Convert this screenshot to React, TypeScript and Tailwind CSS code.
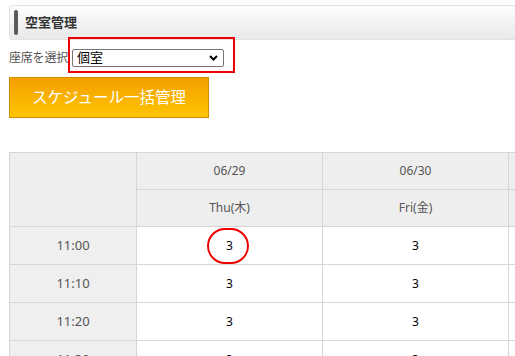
import React from "react";

const font = { fontFamily: '"Noto Sans", "Noto Sans CJK JP", sans-serif' };

const rows = ["11:00", "11:10", "11:20", "11:30"];
const days = [
  { d: "06/29", w: "Thu(木)" },
  { d: "06/30", w: "Fri(金)" },
];

export default function App() {
  return (
    <div className="w-[515px] h-[356px] overflow-hidden bg-white relative" style={font}>
      <div className="w-[900px] pl-[9px] pt-[5px]">
        {/* header bar */}
        <div className="h-[35px] rounded-[3px] border border-[#e3e3e3] bg-gradient-to-b from-[#fdfdfd] to-[#e9e9e9] flex items-center pl-[4px]">
          <div className="w-[4px] h-[25px] rounded-[2px] bg-[#5a5a5a]" />
          <span className="ml-[7px] text-[13px] font-bold text-[#333] leading-none">空室管理</span>
        </div>

        {/* select row */}
        <div className="mt-[9px] flex items-center h-[17px]">
          <span className="text-[12px] text-[#555] leading-none tracking-[-0.2px]">座席を選択</span>
          <div className="ml-[4px] w-[152px] h-[18px] border border-[#767676] rounded-[2px] bg-white flex items-center justify-between pl-[4px] pr-[5px]">
            <span className="text-[13px] text-black leading-none">個室</span>
            <svg width="9" height="6" viewBox="0 0 9 6">
              <path d="M1 1 L4.5 4.5 L8 1" fill="none" stroke="#000" strokeWidth="2" />
            </svg>
          </div>
        </div>

        {/* button */}
        <div className="mt-[11px] w-[200px] h-[41px] border border-[#d48c00] bg-gradient-to-b from-[#f5a000] to-[#fdc400] flex items-center justify-center">
          <span className="text-[15.5px] text-white leading-none">スケジュール一括管理</span>
        </div>

        {/* table */}
        <table className="mt-[34px] border-collapse text-[12px] text-[#555] table-fixed">
          <colgroup>
            <col className="w-[127px]" />
            <col className="w-[186px]" />
            <col className="w-[186px]" />
            <col className="w-[186px]" />
          </colgroup>
          <thead>
            <tr className="h-[37px]">
              <th rowSpan={2} className="border border-[#d6d6d6] bg-[#eeeeee] font-normal" />
              {days.map((x) => (
                <th key={x.d} className="border border-[#d6d6d6] bg-[#eeeeee] font-normal text-center">
                  {x.d}
                </th>
              ))}
              <th className="border border-[#d6d6d6] bg-[#eeeeee]" />
            </tr>
            <tr className="h-[37px]">
              {days.map((x) => (
                <th key={x.w} className="border border-[#d6d6d6] bg-[#eeeeee] font-normal text-center">
                  {x.w}
                </th>
              ))}
              <th className="border border-[#d6d6d6] bg-[#eeeeee]" />
            </tr>
          </thead>
          <tbody>
            {rows.map((t) => (
              <tr key={t} className="h-[38px]">
                <td className="border border-[#d6d6d6] bg-[#efefef] text-center text-[13px] text-[#555]">{t}</td>
                {days.map((x) => (
                  <td key={x.d} className="border border-[#d6d6d6] bg-white text-center text-[12px] text-black">
                    3
                  </td>
                ))}
                <td className="border border-[#d6d6d6] bg-white" />
              </tr>
            ))}
          </tbody>
        </table>
      </div>

      {/* red highlight box around select */}
      <div className="absolute left-[68px] top-[37px] w-[167px] h-[36px] border-2 border-[#ee0000]" />
      {/* red circle */}
      <div className="absolute left-[207px] top-[228px] w-[42px] h-[36px] rounded-full border-2 border-[#ee0000]" />
    </div>
  );
}
